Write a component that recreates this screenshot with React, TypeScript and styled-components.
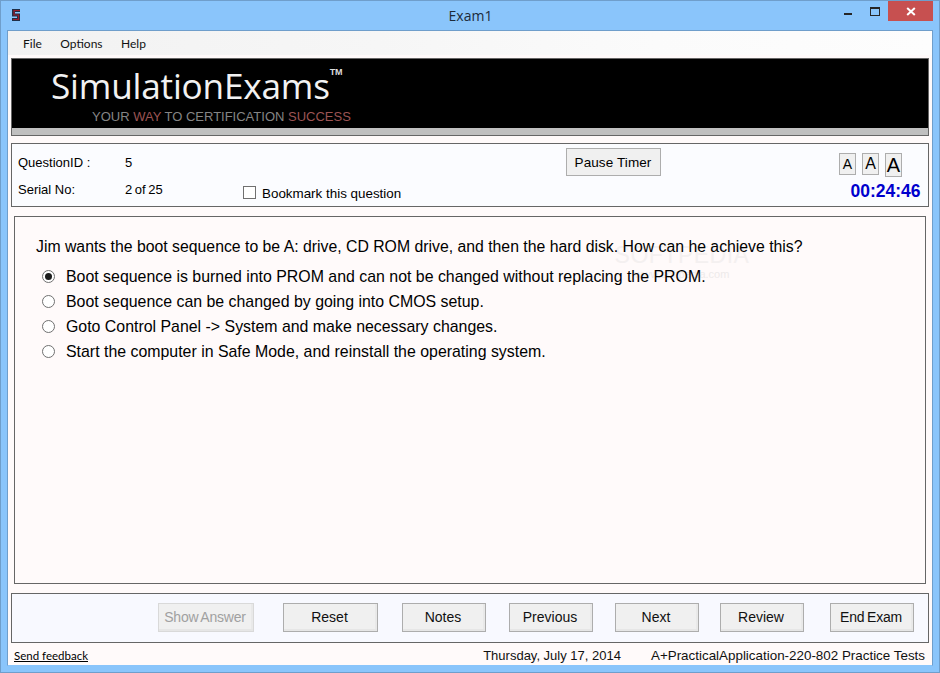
import React from "react";
import styled, { createGlobalStyle } from "styled-components";

const Global = createGlobalStyle`
  html, body { margin: 0; padding: 0; background: #8ac5fb; }
  * { box-sizing: border-box; }
  body { font-family: "Liberation Sans", Arial, sans-serif; color: #000; }
`;

const Win = styled.div`
  width: 940px; height: 673px; background: #8ac5fb;
  border: 1px solid #6f9ecb; display: flex; flex-direction: column; overflow: hidden;
`;
const TitleBar = styled.div`
  height: 29px; flex: none; display: flex; align-items: flex-start; position: relative;
`;
const AppIcon = styled.svg`
  width: 8px; height: 12px; margin: 8px 0 0 11px; flex: none;
`;
const TitleText = styled.div`
  position: absolute; left: 0; right: 0; top: 6px; text-align: center;
  font: 14px/18px "Open Sans", "Noto Sans", sans-serif; color: #1c2b3a; padding-left: 1px;
`;
const Controls = styled.div`
  margin-left: auto; margin-right: 6px; display: flex; align-items: flex-start; position: relative;
`;
const MinBtn = styled.div`
  width: 8px; height: 2px; background: #262626; margin: 12px 18px 0 0;
`;
const MaxBtn = styled.div`
  width: 10px; height: 9px; border: 1px solid #262626; border-top-width: 2px; margin: 6px 8px 0 0;
`;
const CloseBtn = styled.div`
  width: 45px; height: 20px; background: #c75050; display: flex; align-items: center; justify-content: center;
`;
const Client = styled.div`
  flex: none; width: 926px; height: 636px; margin-left: 6px; background: #fffafa;
  border: 1px solid #6f9ecb; border-bottom-color: #8ac5fb;
  display: flex; flex-direction: column;
`;
const MenuBar = styled.div`
  height: 24px; flex: none; display: flex; align-items: center; padding-left: 15px; gap: 18.5px;
  background: linear-gradient(to right, #f2f2f2, #f6f6f6 40%, #fbfbfb 70%, #fdfdfd);
  font: 12px Lato, "Open Sans", sans-serif; color: #111;
`;
const Banner = styled.div`
  height: 78px; margin: 3px 3px 0 3px; flex: none; border: 1px solid #666; background: #c0c0c0;
  display: flex; flex-direction: column;
`;
const BannerBlack = styled.div`
  height: 69px; background: #000; padding: 8px 0 0 39px;
`;
const Logo = styled.div`
  font: 35.2px/36px "Open Sans", "Noto Sans", sans-serif; color: #f2f2f2; display: flex; letter-spacing: -0.2px;
`;
const Tm = styled.span`
  font: bold 9px/10px "Liberation Sans", sans-serif; margin: 0 0 0 0; color: #ddd;
`;
const Tag = styled.div`
  font: 13px/15px "Liberation Sans", sans-serif; color: #858585; margin: 6px 0 0 41px; white-space: nowrap;
`;
const TagRed = styled.span`
  color: #9c5454;
`;
const InfoPanel = styled.div`
  height: 64px; margin: 7px 3px 0 3px; flex: none; border: 1px solid #666; background: #fbfcff;
  display: grid; grid-template-columns: 107px 118px 323px 95px 178px 89px;
  padding: 0 0 0 6px;
`;
const LabelCol = styled.div`
  display: flex; flex-direction: column; gap: 12px; padding-top: 11px; font-size: 13px; line-height: 15px;
`;
const ValueCol = styled(LabelCol)`
  word-spacing: -1px;
`;
const BookmarkCell = styled.label`
  display: flex; align-items: flex-start; padding-top: 41px; gap: 6px; font-size: 13.4px; line-height: 15px;
`;
const Check = styled.span`
  width: 13px; height: 13px; border: 1px solid #707070; background: #fff; flex: none; margin-top: 1px;
`;
const BookmarkText = styled.span`
  margin-top: 1px;
`;
const PauseCell = styled.div`
  padding-top: 4px;
`;
const PauseBtn = styled.div`
  width: 95px; height: 28px; border: 1px solid #adadad; background: #f0f0f0; display: flex; align-items: center;
  justify-content: center; font-size: 13.5px; letter-spacing: 0.1px; padding-right: 1px;
`;
const RightCol = styled.div`
  display: flex; flex-direction: column; align-items: flex-start; padding-top: 9px;
`;
const SizeRow = styled.div`
  display: flex; gap: 6px; align-items: flex-start;
`;
const SizeBtn = styled.div<{ $h: number; $fs: number }>`
  width: 17px; height: ${(p) => p.$h}px; border: 1px solid #adadad; background: #f0f0f0;
  display: flex; align-items: center; justify-content: center; font-size: ${(p) => p.$fs}px; line-height: 1;
  flex: none;
`;
const Timer = styled.div`
  font: bold 17.5px/20px "Liberation Sans", sans-serif; color: #0000cd; margin: 4px 0 0 11.5px; white-space: nowrap;
`;
const Question = styled.div`
  height: 368px; margin: 9px 6px 0 6px; flex: none; border: 1px solid #666; background: #fffafa;
  padding: 21px 0 0 21px; position: relative;
`;
const QText = styled.div`
  position: relative; z-index: 1; font-size: 15.8px; line-height: 18px; margin-bottom: 8px;
`;
const Opt = styled.div`
  position: relative; z-index: 1; display: flex; align-items: center; height: 25px; gap: 11px; margin-left: 6px;
  font-size: 15.9px;
`;
const Radio = styled.span<{ $on?: boolean }>`
  width: 13px; height: 13px; border-radius: 50%; border: 1px solid #707070; background: #fff; flex: none;
  display: flex; align-items: center; justify-content: center;
  &::after { content: ""; width: 7px; height: 7px; border-radius: 50%; background: ${(p) => (p.$on ? "#1c1c1c" : "transparent")}; }
`;
const Watermark = styled.div`
  position: absolute; left: 605px; top: 26px; display: flex; flex-direction: column; align-items: center;
  width: 124px; color: #f4f0f0; pointer-events: none;
`;
const WatermarkBig = styled.span`
  font: 23px/24px "Liberation Sans", sans-serif; letter-spacing: 0.5px;
`;
const WatermarkSmall = styled.span`
  font: 11px/12px "Liberation Sans", sans-serif; color: #eeeaea; margin-top: 1px;
`;
const BottomPanel = styled.div`
  height: 50px; margin: 9px 3px 0 3px; flex: none; border: 1px solid #666; background: #f8f9ff;
  display: flex; align-items: flex-start; padding: 9px 0 0 146px;
`;
const Btn = styled.div<{ $w: number; $gap: number; $off?: boolean; $tight?: boolean }>`
  width: ${(p) => p.$w}px; margin-right: ${(p) => p.$gap}px; height: 29px; flex: none;
  border: 1px solid ${(p) => (p.$off ? "#d9d9d9" : "#adadad")}; background: #f0f0f0;
  box-shadow: inset 0 -2px 0 #e6e6e6, inset -2px 0 0 #e9e9e9;
  color: ${(p) => (p.$off ? "#a0a0a0" : "#111")};
  display: flex; align-items: center; justify-content: center; padding: 0 2px 1px 0;
  font-size: 14px;
  ${(p) => (p.$tight ? "letter-spacing: -0.2px; word-spacing: -1px;" : "")}
`;
const Footer = styled.div`
  flex: 1; display: flex; align-items: center; padding: 2px 7px 0 6px; color: #111;
`;
const Feedback = styled.a`
  font: 11.5px Lato, "Open Sans", sans-serif; color: #000; text-decoration: underline;
`;
const DateText = styled.span`
  margin-left: auto; margin-right: 30px; font-size: 13px;
`;
const Course = styled.span`
  font-size: 13.4px;
`;

export default function App() {
  return (
    <>
      <Global />
      <Win>
        <TitleBar>
          <AppIcon viewBox="0 0 8 12">
            <path d="M8 1.5H1.5V6H6.5V10.5H0" fill="none" stroke="#1f2f48" strokeWidth="3" />
            <path d="M8 1.5H2V6H6.5V10.5H1" fill="none" stroke="#9a1c2c" strokeWidth="1.2" />
          </AppIcon>
          <TitleText>Exam1</TitleText>
          <Controls>
            <MinBtn />
            <MaxBtn />
            <CloseBtn>
              <svg width="10" height="9" viewBox="0 0 10 9">
                <path d="M1.2 1 8.8 8M8.8 1 1.2 8" stroke="#fff" strokeWidth="2" />
              </svg>
            </CloseBtn>
          </Controls>
        </TitleBar>
        <Client>
          <MenuBar>
            <span>File</span>
            <span>Options</span>
            <span>Help</span>
          </MenuBar>
          <Banner>
            <BannerBlack>
              <Logo>
                SimulationExams<Tm>TM</Tm>
              </Logo>
              <Tag>
                YOUR <TagRed>WAY</TagRed> TO CERTIFICATION <TagRed>SUCCESS</TagRed>
              </Tag>
            </BannerBlack>
          </Banner>
          <InfoPanel>
            <LabelCol>
              <span>QuestionID :</span>
              <span>Serial No:</span>
            </LabelCol>
            <ValueCol>
              <span>5</span>
              <span>2 of 25</span>
            </ValueCol>
            <BookmarkCell>
              <Check />
              <BookmarkText>Bookmark this question</BookmarkText>
            </BookmarkCell>
            <PauseCell>
              <PauseBtn>Pause Timer</PauseBtn>
            </PauseCell>
            <div />
            <RightCol>
              <SizeRow>
                <SizeBtn $h={22} $fs={14}>A</SizeBtn>
                <SizeBtn $h={22} $fs={16}>A</SizeBtn>
                <SizeBtn $h={24} $fs={20}>A</SizeBtn>
              </SizeRow>
              <Timer>00:24:46</Timer>
            </RightCol>
          </InfoPanel>
          <Question>
            <Watermark>
              <WatermarkBig>SOFTPEDIA</WatermarkBig>
              <WatermarkSmall>www.softpedia.com</WatermarkSmall>
            </Watermark>
            <QText>
              Jim wants the boot sequence to be A: drive, CD ROM drive, and then the hard disk. How can he achieve this?
            </QText>
            <Opt><Radio $on />Boot sequence is burned into PROM and can not be changed without replacing the PROM.</Opt>
            <Opt><Radio />Boot sequence can be changed by going into CMOS setup.</Opt>
            <Opt><Radio />Goto Control Panel -&gt; System and make necessary changes.</Opt>
            <Opt><Radio />Start the computer in Safe Mode, and reinstall the operating system.</Opt>
          </Question>
          <BottomPanel>
            <Btn $w={96} $gap={29} $off $tight>Show Answer</Btn>
            <Btn $w={95} $gap={24}>Reset</Btn>
            <Btn $w={84} $gap={23}>Notes</Btn>
            <Btn $w={84} $gap={22}>Previous</Btn>
            <Btn $w={84} $gap={21}>Next</Btn>
            <Btn $w={84} $gap={26}>Review</Btn>
            <Btn $w={84} $gap={0} $tight>End Exam</Btn>
          </BottomPanel>
          <Footer>
            <Feedback>Send feedback</Feedback>
            <DateText>Thursday, July 17, 2014</DateText>
            <Course>A+PracticalApplication-220-802 Practice Tests</Course>
          </Footer>
        </Client>
      </Win>
    </>
  );
}
